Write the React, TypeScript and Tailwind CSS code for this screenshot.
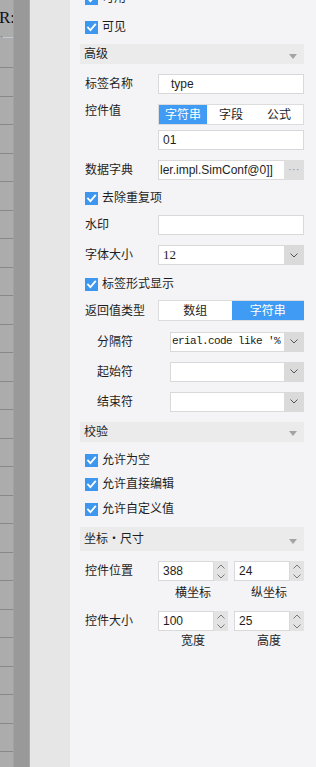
import React from "react";

const Check = () => (
  <span className="w-[13px] h-[13px] bg-[#3d97ef] flex items-center justify-center shrink-0">
    <svg width="11" height="11" viewBox="0 0 11 11">
      <path d="M2 5.6 L4.4 8.2 L9.2 2.6" stroke="white" strokeWidth="1.8" fill="none" strokeLinecap="square" />
    </svg>
  </span>
);

const CheckRow = ({ label, cls = "" }: { label: string; cls?: string }) => (
  <div className={`flex items-center h-[13px] pl-[15px] gap-[4px] text-[12px] leading-[13px] text-[#1e1e1e] ${cls}`}>
    <Check />
    <span>{label}</span>
  </div>
);

const Tri = () => (
  <svg width="8" height="5" viewBox="0 0 8 5" className="mt-[4px]">
    <polygon points="0,0 8,0 4,5" fill="#a3a3a3" />
  </svg>
);

const Header = ({ label, cls = "", h = "h-[20px]" }: { label: string; cls?: string; h?: string }) => (
  <div className={`ml-[10px] mr-[12px] ${h} bg-[#ebebeb] flex items-center justify-between pl-[4px] pr-[7px] text-[12px] text-[#1e1e1e] ${cls}`}>
    <span>{label}</span>
    <Tri />
  </div>
);

const Chevron = () => (
  <svg width="8" height="5" viewBox="0 0 8 5">
    <polyline points="0.5,0.5 4,4 7.5,0.5" stroke="#555" strokeWidth="1" fill="none" />
  </svg>
);

const Select = ({ children }: { children?: React.ReactNode }) => (
  <div className="h-[20px] flex bg-white border border-[#d9d9d9] border-r-0">
    <div className="flex-1 overflow-hidden whitespace-nowrap flex items-center">{children}</div>
    <div className="w-[20px] bg-[#dadada] flex items-center justify-center">
      <Chevron />
    </div>
  </div>
);

const Input = ({ children, cls = "" }: { children?: React.ReactNode; cls?: string }) => (
  <div className={`h-[20px] bg-white border border-[#d9d9d9] flex items-center text-[12px] text-[#1e1e1e] overflow-hidden whitespace-nowrap ${cls}`}>
    {children}
  </div>
);

const Spinner = ({ v }: { v: string }) => (
  <div className="w-[70px] h-[20px] flex">
    <div className="flex-1 bg-white border border-[#d9d9d9] flex items-center pl-[4px] text-[12px] text-[#1e1e1e]">{v}</div>
    <div className="w-[14px] bg-[#e3e3e3] flex flex-col items-center justify-center gap-[5px]">
      <svg width="8" height="5" viewBox="0 0 8 5">
        <polyline points="0.5,4.5 4,1 7.5,4.5" stroke="#7a7a7a" strokeWidth="1" fill="none" />
      </svg>
      <svg width="8" height="5" viewBox="0 0 8 5">
        <polyline points="0.5,0.5 4,4 7.5,0.5" stroke="#7a7a7a" strokeWidth="1" fill="none" />
      </svg>
    </div>
  </div>
);

const Row = ({ label, children, cls = "", indent = false }: { label: string; children: React.ReactNode; cls?: string; indent?: boolean }) => (
  <div className={`flex items-center ${indent ? "pl-[27px]" : "pl-[15px]"} pr-[12px] ${cls}`}>
    <div className="w-[73px] shrink-0 text-[12px] text-[#1e1e1e] leading-[20px]">{label}</div>
    <div className="flex-1 min-w-0">{children}</div>
  </div>
);

export default function App() {
  const lines = Array.from({ length: 25 });
  return (
    <div className="w-[316px] h-[767px] flex overflow-hidden font-['Liberation_Sans','Noto_Sans_CJK_SC',sans-serif] bg-[#f4f4f6]">
      {/* left strips */}
      <div className="w-[70px] flex shrink-0 h-full">
        <div className="w-[13px] bg-[#acacac] flex flex-col overflow-hidden">
          <div className="h-[67px] shrink-0 relative overflow-hidden">
            <div className="mt-[8px] ml-[-1px] font-['Liberation_Serif',serif] text-[17px] leading-[20px] text-[#111] whitespace-nowrap">R:</div>
            <div className="mt-[9px] h-[1px] ml-[3px] bg-[#c2c9d2]" />
            <div className="absolute left-0 top-[35px] text-[8px] leading-[8px] text-[#2d4a7a]">`</div>
          </div>
          {lines.map((_, i) => (
            <div key={i} className="h-[28.5px] shrink-0 border-t border-[#888888]" />
          ))}
        </div>
        <div className="w-[1px] bg-[#a3a3a3]" />
        <div className="w-[15px] bg-[#999999]" />
        <div className="w-[1px] bg-[#a9a9a9]" />
        <div className="w-[40px] bg-[#e6e6e6]" />
      </div>

      {/* main panel */}
      <div className="flex-1 flex flex-col">
        <CheckRow label="可用" cls="mt-[-8px]" />
        <CheckRow label="可见" cls="mt-[15.5px]" />
        <Header label="高级" cls="mt-[10.5px]" />
        <Row label="标签名称" cls="mt-[10px]">
          <Input cls="pl-[12px]">type</Input>
        </Row>
        <div className="flex items-start pl-[15px] pr-[12px] mt-[10px]">
          <div className="w-[73px] shrink-0 text-[12px] text-[#1e1e1e] leading-[14px]">控件值</div>
          <div className="flex-1 flex flex-col">
            <div className="h-[21px] flex border border-[#dcdcdc] bg-white text-[12px] text-[#1e1e1e]">
              <div className="flex-1 bg-[#3f9bf3] text-white flex items-center justify-center">字符串</div>
              <div className="flex-1 flex items-center justify-center">字段</div>
              <div className="flex-1 flex items-center justify-center">公式</div>
            </div>
            <Input cls="mt-[5px] pl-[4px]">01</Input>
          </div>
        </div>
        <Row label="数据字典" cls="mt-[10px]">
          <div className="flex h-[20px]">
            <Input cls="flex-1 pl-[1px] text-[12.5px] border-r-0">ler.impl.SimConf@0]]</Input>
            <div className="w-[20px] bg-[#dedede] flex items-center justify-center">
              <span className="text-[#8a8a8a] text-[10px] leading-[10px] tracking-[0.5px]">···</span>
            </div>
          </div>
        </Row>
        <CheckRow label="去除重复项" cls="mt-[11.5px]" />
        <Row label="水印" cls="mt-[10.5px]">
          <Input />
        </Row>
        <Row label="字体大小" cls="mt-[10px]">
          <Select>
            <span className="pl-[4px] font-['Liberation_Serif',serif] text-[13px] text-[#1e1e1e]">12</span>
          </Select>
        </Row>
        <CheckRow label="标签形式显示" cls="mt-[12.5px]" />
        <Row label="返回值类型" cls="mt-[9.5px]">
          <div className="h-[21px] flex border border-[#dcdcdc] border-r-0 bg-white text-[12px] text-[#1e1e1e]">
            <div className="flex-1 flex items-center justify-center">数组</div>
            <div className="flex-1 bg-[#3f9bf3] text-white flex items-center justify-center">字符串</div>
          </div>
        </Row>
        <Row label="分隔符" indent cls="mt-[10.5px]">
          <Select>
            <span className="pl-[1px] font-['Liberation_Mono',monospace] text-[11px] tracking-[-0.6px] text-[#1a1a1a]">erial.code like '%</span>
          </Select>
        </Row>
        <Row label="起始符" indent cls="mt-[10px]">
          <Select />
        </Row>
        <Row label="结束符" indent cls="mt-[10px]">
          <Select />
        </Row>
        <Header label="校验" cls="mt-[10px]" />
        <CheckRow label="允许为空" cls="mt-[12.5px]" />
        <CheckRow label="允许直接编辑" cls="mt-[11px]" />
        <CheckRow label="允许自定义值" cls="mt-[12px]" />
        <Header label="坐标・尺寸" cls="mt-[11px]" h="h-[24px]" />
        <Row label="控件位置" cls="mt-[10px]">
          <div className="flex gap-[6px]">
            <Spinner v="388" />
            <Spinner v="24" />
          </div>
        </Row>
        <div className="flex pl-[88px] pr-[12px] mt-[6px] gap-[6px] text-[12px] leading-[13px] text-[#1e1e1e]">
          <div className="w-[70px] text-center">横坐标</div>
          <div className="w-[70px] text-center">纵坐标</div>
        </div>
        <Row label="控件大小" cls="mt-[11px]">
          <div className="flex gap-[6px]">
            <Spinner v="100" />
            <Spinner v="25" />
          </div>
        </Row>
        <div className="flex pl-[88px] pr-[12px] mt-[4px] gap-[6px] text-[12px] leading-[13px] text-[#1e1e1e]">
          <div className="w-[70px] text-center">宽度</div>
          <div className="w-[70px] text-center">高度</div>
        </div>
      </div>
    </div>
  );
}
